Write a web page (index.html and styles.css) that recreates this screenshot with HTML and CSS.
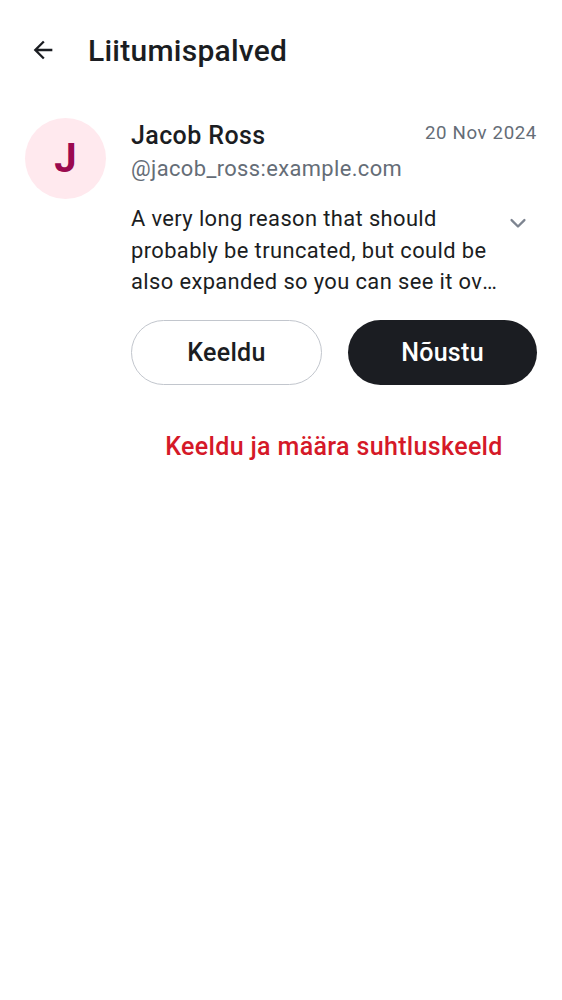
FILE: index.html
```html
<!DOCTYPE html>
<html lang="et">
<head>
<meta charset="utf-8">
<link rel="stylesheet" href="styles.css">
</head>
<body>
<header class="topbar">
  <button class="back" aria-label="Tagasi">
    <svg width="28" height="28" viewBox="0 0 24 24"><path d="M20 11H7.83l5.59-5.59L12 4l-8 8 8 8 1.41-1.41L7.83 13H20v-2z" fill="#1b1d22"/></svg>
  </button>
  <h1 class="title">Liitumispalved</h1>
</header>
<main class="request">
  <div class="avatar">J</div>
  <div class="content">
    <div class="head">
      <div class="names">
        <div class="name">Jacob Ross</div>
        <div class="handle">@jacob_ross:example.com</div>
      </div>
      <div class="date">20 Nov 2024</div>
    </div>
    <div class="reason-row">
      <p class="reason"><span class="reason-lines">A very long reason that should probably be truncated, but could be</span><span class="reason-last">also expanded so you can see it over multiple lines when needed</span></p>
      <svg class="chev" width="28" height="28" viewBox="0 0 24 24"><path d="M6.5 9.5 12 15l5.5-5.5" fill="none" stroke="#7d8490" stroke-width="2" stroke-linecap="round" stroke-linejoin="round"/></svg>
    </div>
    <div class="actions">
      <button class="btn outline">Keeldu</button>
      <button class="btn filled">Nõustu</button>
    </div>
    <button class="link">Keeldu ja määra suhtluskeeld</button>
  </div>
</main>
</body>
</html>
```
FILE: styles.css
```css
* { box-sizing: border-box; }
html, body { margin: 0; padding: 0; background: #fff; }
body {
  font-family: Roboto, "Noto Sans", sans-serif;
  color: #1b1d22;
  width: 562px;
}
button { font-family: inherit; }
.topbar {
  display: flex;
  align-items: center;
  height: 100px;
  padding-left: 29px;
}
.back {
  border: 0;
  background: none;
  padding: 0;
  width: 28px;
  height: 28px;
  display: flex;
}
.title {
  margin: 0 0 0 31px;
  font-size: 30px;
  font-weight: 500;
  letter-spacing: 0.25px;
  color: #1b1d22;
}
.request {
  display: flex;
  padding: 18px 25px 0 25px;
  gap: 25px;
}
.avatar {
  flex: none;
  width: 81px;
  height: 81px;
  border-radius: 50%;
  background: #ffe9ee;
  color: #9b0a4f;
  font-size: 40px;
  font-weight: 700;
  display: flex;
  align-items: center;
  justify-content: center;
}
.content { flex: 1; min-width: 0; padding-top: 1px; }
.head { display: flex; justify-content: space-between; align-items: flex-start; }
.name {
  font-size: 25px;
  font-weight: 500;
  line-height: 34px;
  letter-spacing: 0.4px;
}
.handle {
  font-size: 21.9px;
  color: #656d77;
  line-height: 32px;
  letter-spacing: 0.39px;
}
.date {
  font-size: 18.7px;
  color: #656d77;
  line-height: 28px;
  letter-spacing: 0.62px;
}
.reason-row {
  display: flex;
  align-items: flex-start;
  margin-top: 18px;
}
.reason {
  margin: 0;
  flex: 1;
  min-width: 0;
  font-size: 21.9px;
  line-height: 31.5px;
  letter-spacing: 0.39px;
  padding-right: 2px;
}
.reason-lines { display: block; }
.reason-last {
  display: block;
  white-space: nowrap;
  overflow: hidden;
  text-overflow: ellipsis;
}
.chev { flex: none; margin: 6px 5px 0 0; }
.actions {
  display: flex;
  gap: 26px;
  margin-top: 22px;
}
.btn {
  flex: 1;
  height: 65px;
  border-radius: 33px;
  font-size: 25px;
  font-weight: 500;
  letter-spacing: 0.3px;
}
.outline { background: #fff; border: 1.5px solid #c2c6cd; color: #1b1d22; }
.filled { background: #1b1d22; border: 0; color: #fff; }
.link {
  display: block;
  width: 100%;
  margin-top: 39px;
  border: 0;
  background: none;
  color: #d51928;
  font-size: 25px;
  font-weight: 500;
  letter-spacing: 0.35px;
  padding: 0;
  line-height: 46px;
}
```
